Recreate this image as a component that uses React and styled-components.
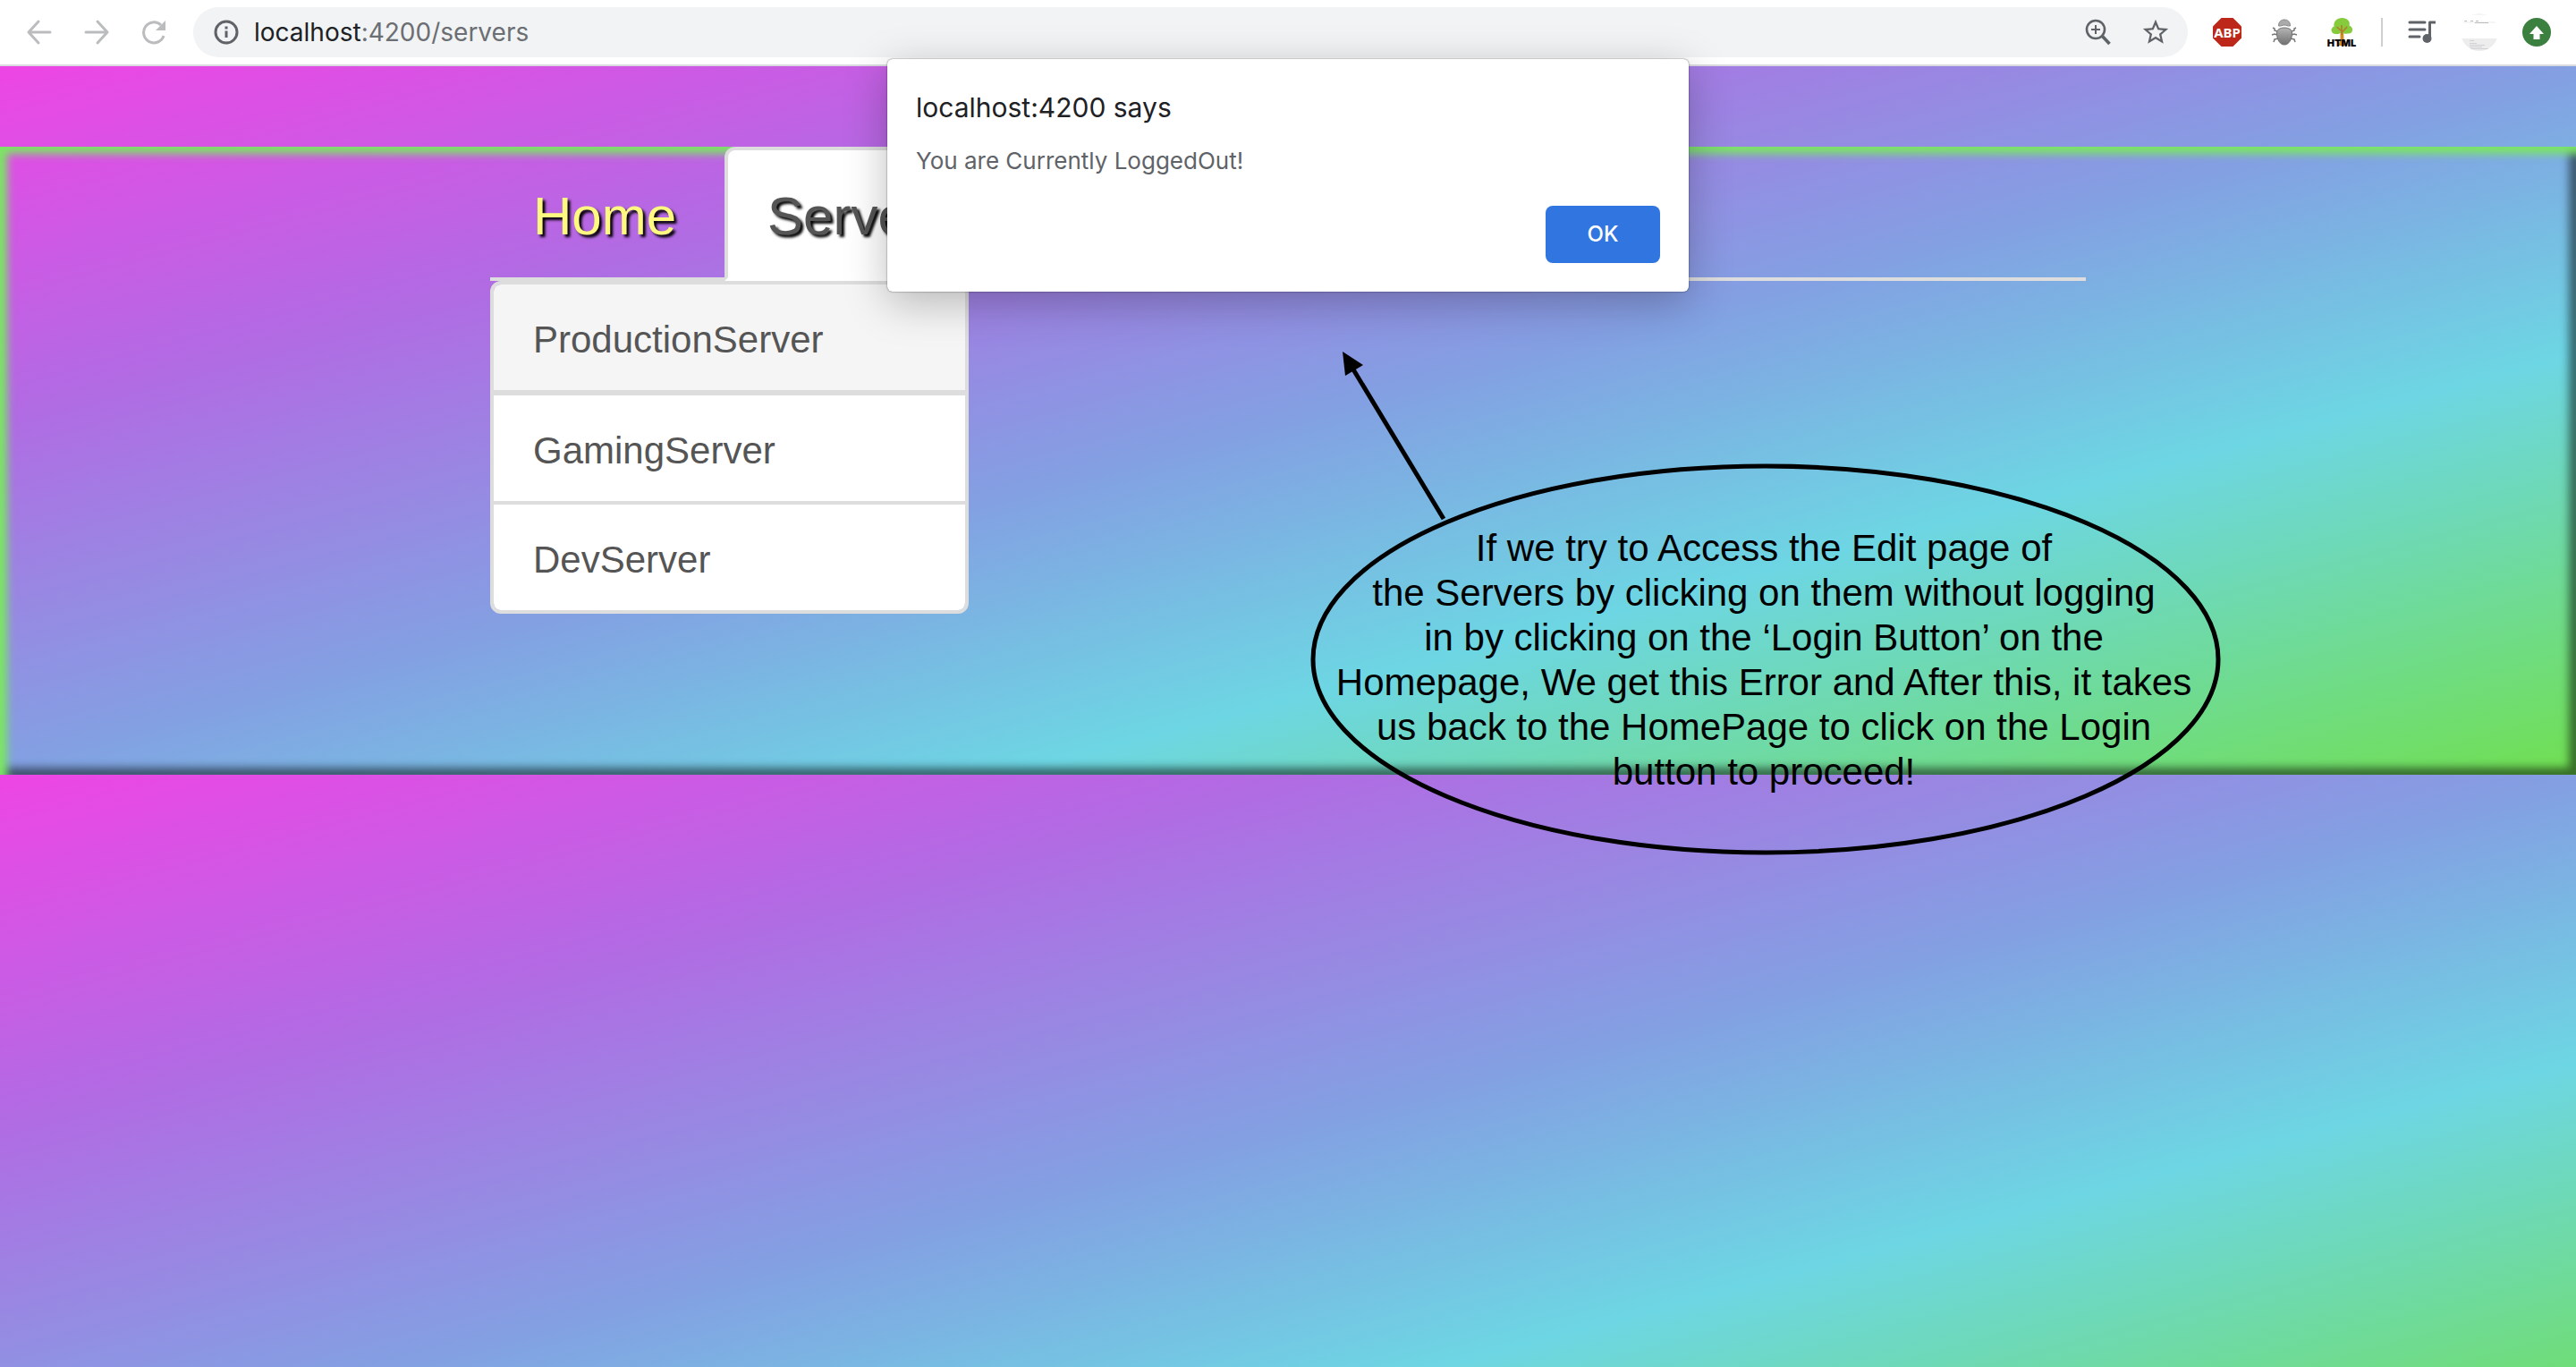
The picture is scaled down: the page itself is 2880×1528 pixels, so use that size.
import React from "react";
import styled, { createGlobalStyle } from "styled-components";

const Global = createGlobalStyle`
  *, *::before, *::after { box-sizing: border-box; }
  html, body { margin: 0; }
  body { background: #fff; font-family: "Liberation Sans", Arial, sans-serif; }
`;

const Screen = styled.div`
  position: relative;
  display: flex;
  flex-direction: column;
  min-height: 100vh;
  overflow: hidden;
`;

const Toolbar = styled.header`
  display: flex;
  align-items: center;
  height: 74px;
  padding: 0 12px;
  background: #fff;
  border-bottom: 2px solid #d9dbde;
`;

const IconButton = styled.button`
  display: flex;
  align-items: center;
  justify-content: center;
  flex: none;
  width: 64px;
  height: 56px;
  padding: 0;
  border: 0;
  background: none;
  color: ${(p) => p.$color || "#5f6368"};
`;

const AddressBar = styled.div`
  display: flex;
  align-items: center;
  flex: 1;
  height: 56px;
  margin: 0 12px;
  padding: 0 4px 0 22px;
  border-radius: 28px;
  background: #f1f3f4;
`;

const Address = styled.a`
  flex: 1;
  margin-left: 16px;
  font: 28px/36px Inter, sans-serif;
  color: #6b6e72;
  text-decoration: none;
`;

const Host = styled.span`
  color: #202124;
`;

const Divider = styled.span`
  flex: none;
  width: 2px;
  height: 32px;
  margin: 0 12px;
  background: #cfcfcf;
`;

const Page = styled.main`
  flex: 1;
  padding-top: 90px;
  background: linear-gradient(165deg, #ee45e5 0%, #b16be3 25%, #83a0e2 50%, #6dd6e3 70%, #70df50 100%) 0 0 / 100% 792px repeat-y;
`;

const Panel = styled.section`
  min-height: 702px;
  box-shadow: inset 8px 8px 10px #7be664, inset -8px -8px 10px rgba(0, 0, 0, 0.5);
`;

const Container = styled.div`
  width: 62%;
  max-width: 1784px;
  margin: 0 auto;
`;

const Tabs = styled.nav`
  display: flex;
  height: 150px;
  border-bottom: 4px solid #ddd;
`;

const Tab = styled.a`
  flex: none;
  height: 150px;
  padding: 34px 44px;
  border: 4px solid ${(p) => (p.$active ? "#ddd" : "transparent")};
  border-bottom-color: ${(p) => (p.$active ? "#fff" : "transparent")};
  border-radius: 12px 12px 0 0;
  margin-right: 6px;
  background: ${(p) => (p.$active ? "#fff" : "none")};
  color: ${(p) => (p.$active ? "#555" : "#fff97f")};
  font-size: 60px;
  line-height: 80px;
  text-decoration: none;
  text-shadow: 3px 3px 3px #000;
`;

const ServerList = styled.div`
  width: 30%;
  border: 4px solid #ddd;
  border-radius: 12px;
  overflow: hidden;
`;

const ServerLink = styled.a`
  display: block;
  padding: 6px 44px 0;
  border-bottom: ${(p) => p.$line}px solid #ddd;
  background: ${(p) => (p.$hover ? "#f5f5f5" : "#fff")};
  color: #555;
  font-size: 42px;
  line-height: 112px;
  text-decoration: none;
`;

const Dialog = styled.div`
  position: absolute;
  top: 66px;
  left: 0;
  right: 0;
  width: 896px;
  margin: 0 auto;
  padding: 34px 32px 32px;
  display: flex;
  flex-direction: column;
  border-radius: 6px;
  background: #fff;
  box-shadow: 0 0 2px rgba(0, 0, 0, 0.6), 0 12px 48px rgba(0, 0, 0, 0.26);
  font-family: Inter, sans-serif;
`;

const DialogTitle = styled.h1`
  margin: 0 0 24px;
  font-size: 30px;
  font-weight: 400;
  line-height: 40px;
  color: #202124;
`;

const DialogText = styled.p`
  margin: 0 0 34px;
  font-size: 26px;
  line-height: 32px;
  color: #5f6368;
`;

const OkButton = styled.button`
  align-self: flex-end;
  width: 128px;
  height: 64px;
  border: 0;
  border-radius: 8px;
  background: #3175e1;
  color: #fff;
  font: 500 24px/32px Inter, sans-serif;
`;

const Note = styled.aside`
  position: absolute;
  top: 388px;
  left: 1464px;
  width: 1020px;
  padding: 200px 4px 0 0;
`;

const NoteShape = styled.svg`
  position: absolute;
  top: 0;
  left: 0;
`;

const NoteText = styled.p`
  position: relative;
  margin: 0;
  font-size: 42px;
  line-height: 50px;
  text-align: center;
  color: #000;
`;

const Arrow = ({ flip }) => (
  <svg width="32" height="36" viewBox="0 0 32 36" fill="none" stroke="currentColor" strokeWidth="3" strokeLinecap="round" strokeLinejoin="round">
    <path d={flip ? "M4 18H28M17 6L28 18L17 30" : "M28 18H4M15 6L4 18L15 30"} />
  </svg>
);

const ReloadIcon = () => (
  <svg width="28" height="28" viewBox="0 0 28 28">
    <path d="M25 18A11.500 11.500 0 1 1 22 6" fill="none" stroke="currentColor" strokeWidth="3" />
    <path d="M27 1V12H16Z" fill="currentColor" />
  </svg>
);

const InfoIcon = () => (
  <svg width="30" height="30" viewBox="0 0 30 30" fill="none" stroke="#5f6368" strokeWidth="3">
    <circle cx="15" cy="15" r="12" />
    <path d="M15 13.5V21M15 8.5V11.5" />
  </svg>
);

const ZoomIcon = () => (
  <svg width="30" height="34" viewBox="0 0 30 34" fill="none" stroke="currentColor">
    <circle cx="12" cy="14" r="10" strokeWidth="2.6" />
    <path d="M12 9V19M7 14H17" strokeWidth="2" />
    <path d="M19 21L27.5 30" strokeWidth="3.6" />
  </svg>
);

const StarIcon = () => (
  <svg width="34" height="34" viewBox="0 0 24 24" fill="currentColor">
    <path d="M22 9.24l-7.19-.62L12 2 9.19 8.63 2 9.24l5.46 4.73L5.82 21 12 17.27 18.18 21l-1.63-7.03L22 9.24zM12 15.4l-3.76 2.27 1-4.28-3.32-2.88 4.38-.38L12 6.1l1.71 4.04 4.38.38-3.32 2.88 1 4.28L12 15.4z" />
  </svg>
);

const AdblockIcon = () => (
  <svg width="32" height="32" viewBox="0 0 32 32">
    <path d="M9.5 0h13L32 9.5v13L22.500 32h-13L0 22.500v-13Z" fill="#bd2719" />
    <text x="16" y="22" textAnchor="middle" fontFamily="Noto Sans, sans-serif" fontWeight="700" fontSize="15" fill="#fff">ABP</text>
  </svg>
);

const BugIcon = () => (
  <svg width="32" height="32" viewBox="0 0 32 32">
    <defs>
      <linearGradient id="bug" x1="0" y1="0" x2="0" y2="1">
        <stop offset="0" stopColor="#b5b5b5" />
        <stop offset="1" stopColor="#707070" />
      </linearGradient>
    </defs>
    <path d="M8 15L5 14V12L3 11M8 19L5 18L2 19M9 23L5 24L4 27M24 15L27 14V12L29 11M24 19L27 18L30 19M23 23L27 24L28 27" fill="none" stroke="#777" strokeWidth="1.500" />
    <path d="M9.500 9C9.500 4 12.500 2 16 2S22.500 4 22.500 9C19.500 9.500 18.500 8 16 8S12.500 9.500 9.500 9Z" fill="#aaa" stroke="#888" />
    <path d="M16 11C21 11 24.500 13 24.500 17C24.500 24 21 30 16 30S7.500 24 7.500 17C7.500 13 11 11 16 11Z" fill="url(#bug)" stroke="#707070" />
  </svg>
);

const TreeIcon = () => (
  <svg width="36" height="34" viewBox="0 0 36 34">
    <path d="M16.500 14H20L20.500 25L23 32H14L16.500 25Z" fill="#d08a26" />
    <path d="M12 19C6 19.500 4.500 12.500 9.500 10.500C8.500 5 13 1 18.500 1S28 5 26.500 9.500C32 11.500 31 19 25 18.500C22 19.500 20 18 18 17C16 18.500 14 19.500 12 19Z" fill="#85cb3c" />
    <path d="M18 20V9M18 16L12.500 11M18.500 17L24 11" stroke="#b9772a" strokeWidth="1.500" fill="none" />
    <text x="18" y="32.500" textAnchor="middle" fontFamily="Inter, sans-serif" fontWeight="900" fontSize="11" fill="#000">HTML</text>
  </svg>
);

const QueueIcon = () => (
  <svg width="34" height="30" viewBox="0 0 34 30" fill="none" stroke="currentColor" strokeWidth="3" strokeLinecap="round">
    <path d="M3 4H20M3 12H20M3 20H14" />
    <path d="M25.500 22V4H32" strokeLinecap="butt" strokeLinejoin="round" />
    <circle cx="22.500" cy="22" r="5" fill="currentColor" stroke="none" />
  </svg>
);

const AvatarIcon = () => (
  <svg width="42" height="42" viewBox="0 0 42 42">
    <defs>
      <clipPath id="face">
        <circle cx="21" cy="21" r="21" />
      </clipPath>
    </defs>
    <g clipPath="url(#face)">
      <path d="M0 0H42V2H0ZM0 9H42V11H0Z" fill="#f5f5f5" />
      <path d="M0 28H42V42H0Z" fill="#ededed" />
      <path d="M4 8.500H7M11 8.500H14M17 8.500H20M16 10.500H31" stroke="#bbb" />
      <path d="M10 30.500H15M10 33.500H18M10 35.500H27M10 37.500H24M10 39.500H31" stroke="#cfcfd4" />
    </g>
  </svg>
);

const UpdateIcon = () => (
  <svg width="32" height="32" viewBox="0 0 32 32">
    <circle cx="16" cy="16" r="16" fill="#3c8040" />
    <path d="M16 9L24 18H19.500V24H12.500V18H8Z" fill="#fff" />
  </svg>
);

const servers = [
  { name: "ProductionServer", line: 6, hover: true },
  { name: "GamingServer", line: 4 },
  { name: "DevServer", line: 0 },
];

const noteLines = [
  "If we try to Access the Edit page of",
  "the Servers by clicking on them without logging",
  "in by clicking on the ‘Login Button’ on the",
  "Homepage, We get this Error and After this, it takes",
  "us back to the HomePage to click on the Login",
  "button to proceed!",
];

export default function App() {
  return (
    <Screen>
      <Global />
      <Toolbar>
        <IconButton aria-label="Back" $color="#babcbe"><Arrow /></IconButton>
        <IconButton aria-label="Forward" $color="#babcbe"><Arrow flip /></IconButton>
        <IconButton aria-label="Reload" $color="#babcbe"><ReloadIcon /></IconButton>
        <AddressBar>
          <InfoIcon />
          <Address href="#servers"><Host>localhost</Host>:4200/servers</Address>
          <IconButton aria-label="Zoom"><ZoomIcon /></IconButton>
          <IconButton aria-label="Bookmark"><StarIcon /></IconButton>
        </AddressBar>
        <IconButton aria-label="Adblock Plus"><AdblockIcon /></IconButton>
        <IconButton aria-label="Debugger"><BugIcon /></IconButton>
        <IconButton aria-label="HTML tree"><TreeIcon /></IconButton>
        <Divider />
        <IconButton aria-label="Media"><QueueIcon /></IconButton>
        <IconButton aria-label="Profile"><AvatarIcon /></IconButton>
        <IconButton aria-label="Update"><UpdateIcon /></IconButton>
      </Toolbar>
      <Page>
        <Panel>
          <Container>
            <Tabs>
              <Tab href="#home">Home</Tab>
              <Tab href="#servers" $active>Servers</Tab>
            </Tabs>
            <ServerList>
              {servers.map(({ name, line, hover }) => (
                <ServerLink key={name} href="#server" $line={line} $hover={hover}>
                  {name}
                </ServerLink>
              ))}
            </ServerList>
          </Container>
        </Panel>
      </Page>
      <Note>
        <NoteShape width="1020" height="570" viewBox="0 0 1020 570" fill="none" stroke="#000">
          <ellipse cx="510" cy="349" rx="506" ry="216" strokeWidth="5" />
          <path d="M150 192L46 20" strokeWidth="5" />
          <path d="M37 5L60 20L40 32Z" fill="#000" stroke="none" />
        </NoteShape>
        <NoteText>
          {noteLines.map((line) => (
            <React.Fragment key={line}>{line}<br /></React.Fragment>
          ))}
        </NoteText>
      </Note>
      <Dialog role="alertdialog" aria-labelledby="dialog-title">
        <DialogTitle id="dialog-title">localhost:4200 says</DialogTitle>
        <DialogText>You are Currently LoggedOut!</DialogText>
        <OkButton>OK</OkButton>
      </Dialog>
    </Screen>
  );
}
